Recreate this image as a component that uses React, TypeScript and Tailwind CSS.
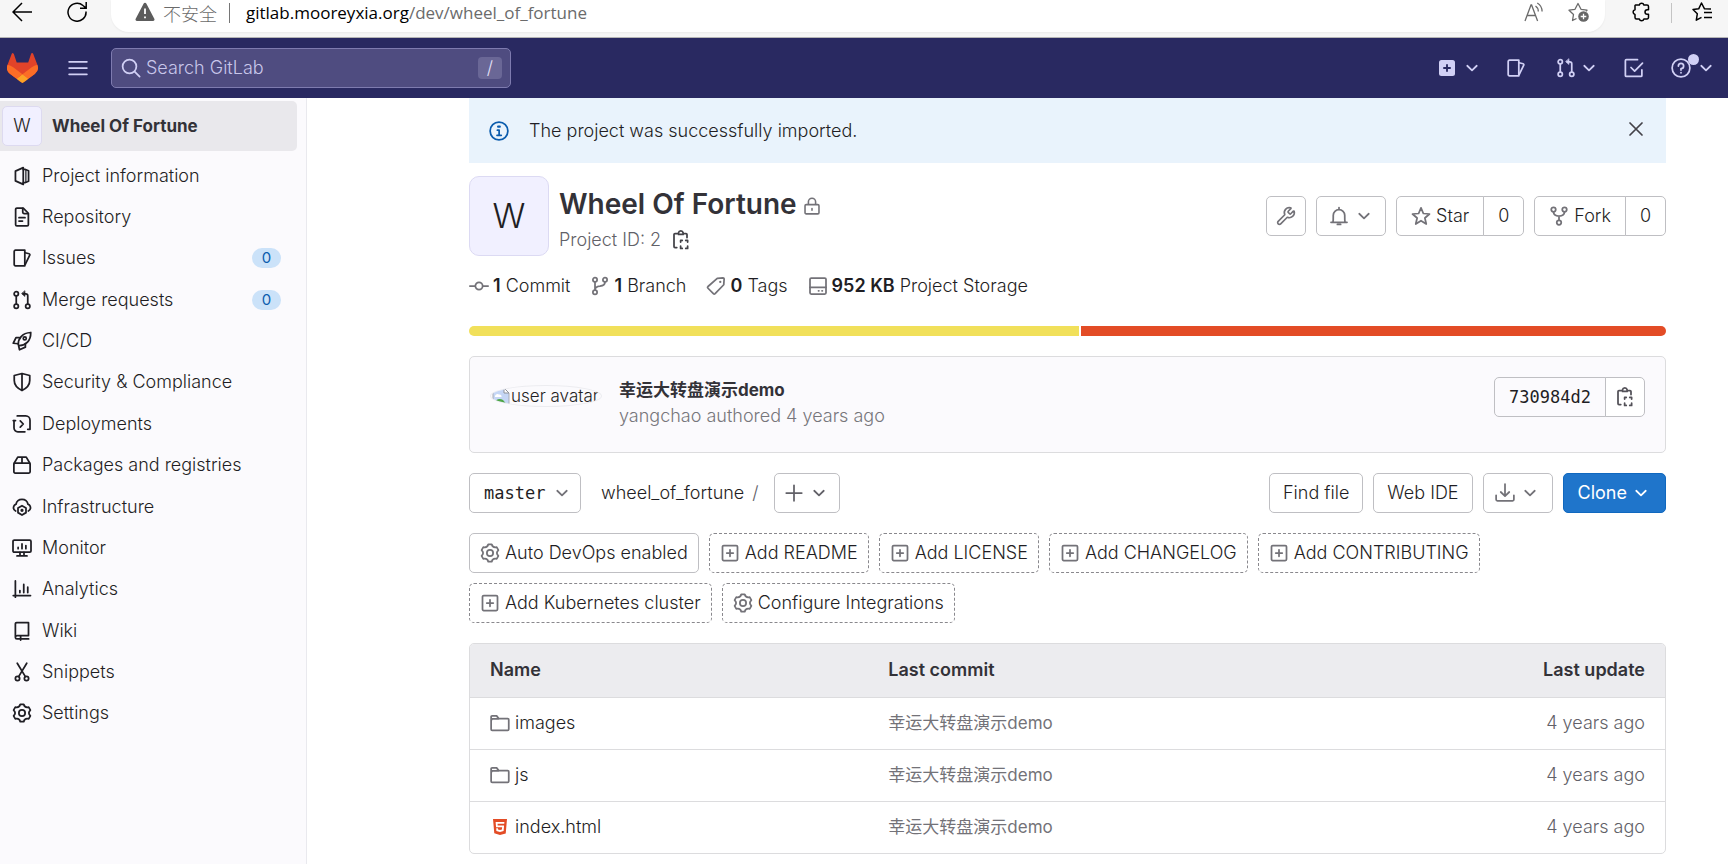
import type { ReactNode } from "react";
import clsx from "clsx";
import { Wrench } from "lucide-react";
import { SiHtml5 } from "react-icons/si";

interface IconProps {
  name: IconName;
  className?: string;
}

const shapes = {
  project: (
    <>
      <path d="M2.75 4.1 9 1.3v13.4l-6.25-2.8z" />
      <path d="M9 2.75h1.75l2.5 1v8.5l-2.5 1H9" />
      <path d="M11.1 3v10" strokeWidth="1" />
    </>
  ),
  doc: (
    <>
      <path d="M9 .9H3.9a1 1 0 0 0-1 1v12.2a1 1 0 0 0 1 1h8.2a1 1 0 0 0 1-1V5z" />
      <path d="M8.6 1v3.2a1 1 0 0 0 1 1h3.2M5.6 8.5h4.8M5.6 11.2h2.8" />
    </>
  ),
  issues: (
    <>
      <path d="M2.75 1.75h7.5v12.5h-7.5a1 1 0 0 1-1-1V2.75a1 1 0 0 1 1-1z" />
      <path d="m10.5 3.8 3.2.8a.8.8 0 0 1 .5 1.1l-3.6 7.4" />
    </>
  ),
  merge: (
    <>
      <circle cx="3.4" cy="3" r="1.7" />
      <circle cx="3.4" cy="12.9" r="1.7" />
      <circle cx="12.6" cy="12.9" r="1.7" />
      <path d="M3.4 4.8v6.3M12.6 11V4.6A1.6 1.6 0 0 0 11 3H9" />
      <path d="M10.3.9v4.2L7.9 3z" fill="currentColor" strokeWidth="0.6" />
    </>
  ),
  rocket: (
    <>
      <path d="M5 10.9C4.8 6.2 8 1.6 15 1.2c.1 6.8-4 10.2-9.2 10.5z" />
      <path d="M6 5.3H3.2L1 9.8l3.9.4M10.7 10.3v2.6L6 15l-.7-3.2" />
      <circle cx="10.2" cy="5.9" r="1.2" />
    </>
  ),
  shield: <path d="M8 1.2 14.2 2.8v4c0 4-2.5 6.2-6.2 8-3.7-1.8-6.2-4-6.2-8v-4zM8 1.5v13" />,
  deploy: (
    <>
      <path d="M4.2 1.5H11a3.4 3.4 0 0 1 3.4 3.4v7.3h-1.8M1.6 5.2V11a3.1 3.1 0 0 0 3.1 3.2h5.6" />
      <path d="M1 5.2h1.8M6.6 5.5 9 8l-2.4 2.5" />
    </>
  ),
  package: (
    <>
      <rect x="1.5" y="6.4" width="13" height="8" rx="1" />
      <path d="M1.7 6.6 4.6 1.7h6.8l2.9 4.9M8 2v4.3" />
    </>
  ),
  cloud: (
    <>
      <path d="M2.9 11.2A2.9 2.9 0 0 1 3.2 5.800a4.9 4.9 0 0 1 9.6 0 2.9 2.9 0 0 1 .3 5.4" />
      <path d="m8 7 3.2 1.8v3.7L8 14.4l-3.2-1.9V8.8z" />
      <circle cx="8" cy="10.7" r=".6" />
    </>
  ),
  monitor: (
    <>
      <rect x=".8" y="1.7" width="14.4" height="9.6" rx="1" />
      <path d="M4.9 7.5v1M8 4.7v3.8M11.1 6v2.5M4 14.3h8M6.4 11.5v2.6M9.6 11.5v2.6" />
    </>
  ),
  chart: <path d="M2.7 1.5v13M1 13.2h13.8M6.3 9.2v1.6M9.4 4.3v6.5M12.6 6.5v4.3" />,
  book: (
    <path d="M2.7 13V2.3a1 1 0 0 1 1-1h9.5v10.3H4.2A1.5 1.5 0 0 0 2.7 13.1c0 .8.6 1.2 1.3 1.2H13.3M6.9 11.8v3.4" />
  ),
  scissors: (
    <>
      <circle cx="4.4" cy="13.2" r="1.7" />
      <circle cx="11.6" cy="13.2" r="1.7" />
      <path d="M4.2 1 10.7 11.7M11.8 1 5.3 11.7" />
    </>
  ),
  gear: (
    <>
      <path d="M6.65 1.03H9.35Q10.1 4.1 13.36 3.34L14.71 5.69Q12.3 8 14.71 10.31L13.36 12.66Q10.1 11.9 9.35 14.97H6.65Q5.9 11.9 2.64 12.66L1.29 10.31Q3.7 8 1.29 5.69L2.64 3.34Q5.9 4.1 6.65 1.03z" />
      <circle cx="8" cy="8" r="2.5" />
    </>
  ),
  info: (
    <>
      <circle cx="8" cy="8" r="7.1" />
      <path d="M6.7 7.3h1.4v4M6.4 11.4h3.4" />
      <path d="M7.3 4.5h1.3" strokeWidth="1.8" />
    </>
  ),
  close: <path d="m3.2 3.2 9.6 9.6M12.8 3.2 3.2 12.8" />,
  lock: (
    <>
      <rect x="1.8" y="6.8" width="12.4" height="8.2" rx="1" />
      <path d="M4.8 6.5V4.3a3.2 3.2 0 0 1 6.4 0v2.2M8 10.2v1.5" />
    </>
  ),
  copy: (
    <>
      <path d="M5 2.8H3.2a.8.8 0 0 0-.8.8v9.6a.8.8 0 0 0 .8.8H4.6M10.8 2.8H12a.8.8 0 0 1 .8.8V6" />
      <path d="M6 3.5V2.2a1.9 1.9 0 0 1 3.7 0v1.3z" />
      <path d="M7.7 9.6v-1.3H9M11.8 8.3h1.5v1.3M13.3 12.9v1.8h-1.5M9 14.7H7.7v-1.8" />
    </>
  ),
  commit: (
    <>
      <circle cx="8" cy="8" r="2.9" />
      <path d="M.7 8h4M11.3 8h4" />
    </>
  ),
  branch: (
    <>
      <circle cx="4" cy="3" r="1.7" />
      <circle cx="4" cy="13" r="1.7" />
      <circle cx="12" cy="3" r="1.7" />
      <path d="M4 4.8v6.4M12 4.8c0 2.6-1.6 3-4 3.3-2.4.2-4 .9-4 3" />
    </>
  ),
  tag: (
    <>
      <path d="M9 1.9 13.6 1.5a.9.9 0 0 1 .9.9L14.2 7l-6.9 7.1a1 1 0 0 1-1.4 0L1.6 9.8a1 1 0 0 1 0-1.4z" />
      <path d="M11.4 4.6v.1" strokeWidth="1.8" />
    </>
  ),
  disk: (
    <>
      <rect x="1.6" y="1.6" width="12.8" height="12.8" rx="1" />
      <path d="M1.6 9h12.8M8.4 11.8h.3M11.2 11.8h.3" />
    </>
  ),
  bell: (
    <path d="M8 1.2v1M1.6 13h12.8M3.2 12.8c.3-1.8.2-3.8.2-5.3a4.6 4.6 0 0 1 9.2 0c0 1.5-.1 3.5.2 5.3M6.7 14.7h2.6" />
  ),
  star: <path d="m8 1.5 1.9 4.5 4.9.4-3.7 3.2 1.1 4.8L8 11.8l-4.2 2.6 1.1-4.8L1.2 6.4l4.9-.4z" />,
  fork: (
    <>
      <circle cx="3.6" cy="2.8" r="1.8" />
      <circle cx="12.4" cy="2.8" r="1.8" />
      <circle cx="8" cy="13.2" r="1.8" />
      <path d="M3.6 4.6C3.6 7.6 5.4 8 8 8s4.4-.4 4.4-3.4M8 8v3.4" />
    </>
  ),
  plus: <path d="M8 1.8v12.4M1.8 8h12.4" />,
  plusBox: (
    <>
      <rect x="2" y="2" width="12" height="12" rx="1" />
      <path d="M8 5.4v5.2M5.4 8h5.2" />
    </>
  ),
  download: <path d="M8 .8v9.5M4.6 7.2 8 10.5l3.4-3.3M.9 9.8v3.4a1 1 0 0 0 1 1h12.2a1 1 0 0 0 1-1V9.8" />,
  folder: <path d="M.9 13V3.1a.8.8 0 0 1 .8-.8h3.6l1.7 2.2h7.2a.8.8 0 0 1 .8.8V13a.8.8 0 0 1-.8.8H1.7a.8.8 0 0 1-.8-.8zM1 5.8l.8-1.2H7" />,
  search: (
    <>
      <circle cx="6.8" cy="6.8" r="5.5" />
      <path d="m10.9 10.9 4 4" />
    </>
  ),
  menu: <path d="M.9 3h14.2M.9 8h14.2M.9 13h14.2" />,
  todo: <path d="M10.8 1.3H1.9a.8.8 0 0 0-.8.8v11.800a.8.8 0 0 0 .8.8h11.600a.8.8 0 0 0 .8-.8V9.5M5.600 7.600l2.900 2.900 6.300-6.400" />,
  help: (
    <>
      <circle cx="8" cy="8" r="7.1" />
      <path d="M5.900 6.400A2.100 2.100 0 1 1 8 8.500v1.100M8 11.600v.2" />
    </>
  ),
  chevron: <path d="M4.200 6.200 8 9.900l3.800-3.700" />,
};

type IconName = keyof typeof shapes;

function Icon({ name, className }: IconProps) {
  return (
    <svg
      viewBox="0 0 16 16"
      fill="none"
      stroke="currentColor"
      strokeWidth="1.4"
      strokeLinecap="round"
      strokeLinejoin="round"
      aria-hidden="true"
      className={clsx("shrink-0", className ?? "size-5")}
    >
      {shapes[name]}
    </svg>
  );
}

function TanukiLogo() {
  return (
    <svg viewBox="0 0 25 24" className="h-[30px] w-[31px]" aria-hidden="true">
      <path
        fill="#E24329"
        d="m24.507 9.5-.034-.09L21.082.562a.896.896 0 0 0-1.694.091l-2.29 7.01H7.825L5.535.653a.898.898 0 0 0-1.694-.09L.451 9.411.416 9.5a6.297 6.297 0 0 0 2.09 7.278l.012.01.03.022 5.16 3.867 2.56 1.935 1.554 1.176a1.051 1.051 0 0 0 1.268 0l1.555-1.176 2.56-1.935 5.197-3.89.014-.01A6.297 6.297 0 0 0 24.507 9.5z"
      />
      <path
        fill="#FC6D26"
        d="m24.507 9.5-.034-.09a11.44 11.44 0 0 0-4.56 2.051l-7.447 5.632 4.742 3.584 5.197-3.89.014-.01A6.297 6.297 0 0 0 24.507 9.5z"
      />
      <path
        fill="#FCA326"
        d="m7.707 20.677 2.56 1.935 1.555 1.176a1.051 1.051 0 0 0 1.268 0l1.555-1.176 2.56-1.935-4.743-3.584-4.755 3.584z"
      />
      <path
        fill="#FC6D26"
        d="M5.01 11.461a11.43 11.43 0 0 0-4.56-2.05L.416 9.5a6.297 6.297 0 0 0 2.09 7.278l.012.01.03.022 5.16 3.867 4.745-3.584-7.444-5.632z"
      />
    </svg>
  );
}

function BrowserBar() {
  return (
    <div className="flex h-[38px] items-start border-b border-[#b5b5b5] bg-[#f6f6f6] pr-4 pl-3 text-black">
      <button type="button" aria-label="Back" className="flex h-6 w-5 items-center">
        <svg viewBox="0 0 20 20" fill="none" stroke="currentColor" strokeWidth="1.5" className="size-5">
          <path d="M20 10H1M10 1 1 10l9 9" />
        </svg>
      </button>
      <button type="button" aria-label="Reload" className="ml-[35px] flex h-6 w-5 items-center">
        <svg viewBox="0 0 20 20" fill="none" stroke="currentColor" strokeWidth="1.5" className="size-5">
          <path d="M19 9.5A9 9 0 1 1 16 3.5L19 6M19.2 0v6.2H13" />
        </svg>
      </button>
      <div className="ml-6 flex h-8 flex-1 items-start rounded-b-[18px] bg-white pr-4 pl-6 text-[#6b6b6b] shadow-xs">
        <svg viewBox="0 0 20 20" className="mt-0.5 size-5 shrink-0" aria-hidden="true">
          <path d="M8.7 1.5a1.5 1.5 0 0 1 2.6 0l8 15.2a1.5 1.5 0 0 1-1.3 2.3H2a1.5 1.5 0 0 1-1.3-2.3z" fill="#5c5c5c" />
          <path d="M10 6.5v5.5M10 14.5v1.8" stroke="#fff" strokeWidth="1.8" />
        </svg>
        <span className="ml-2 font-['Noto_Sans_CJK_SC',sans-serif] leading-[26px]">不安全</span>
        <span className="mt-[3px] ml-3 h-5 w-px bg-[#767676]" />
        <span className="ml-4 font-['Open_Sans',sans-serif] text-[17px] leading-[26px] font-normal">
          <span className="text-black">gitlab.mooreyxia.org</span>/dev/wheel_of_fortune
        </span>
        <button type="button" aria-label="Read aloud" className="ml-auto flex h-6 items-center">
          <svg viewBox="0 0 20 20" fill="none" stroke="currentColor" strokeWidth="1.3" className="size-5">
            <path d="M1 19 7 3h.6l6 16M3.2 13.5h8.3M11.5 4a6.5 6.5 0 0 1 2.8 5.5M13.3 1a10 10 0 0 1 4.8 8.5" />
          </svg>
        </button>
        <button type="button" aria-label="Add to favorites" className="ml-6 flex h-6 items-center">
          <svg viewBox="0 0 21 20" fill="none" stroke="currentColor" strokeWidth="1.3" strokeLinejoin="round" className="h-5 w-[21px]">
            <path d="M8.5 16.5 4.5 18.5l1-6L1 8.2l6-.9L10 1.5l3 5.8 6 .9-1 1" />
            <circle cx="15.5" cy="14.5" r="5.3" fill="#666" stroke="none" />
            <path d="M15.5 11.7v5.6M12.7 14.5h5.6" stroke="#fff" />
          </svg>
        </button>
      </div>
      <button type="button" aria-label="Extensions" className="ml-[26px] flex h-6 items-center">
        <svg viewBox="0 0 20 20" fill="none" stroke="currentColor" strokeWidth="1.5" strokeLinejoin="round" className="size-5">
          <path d="M4.500 3h3.800a2.400 2.400 0 0 1 4.600 0H16a1.500 1.500 0 0 1 1.500 1.500v3.200h-1.200a2.300 2.300 0 0 0 0 4.600h1.200v3.200A1.500 1.500 0 0 1 16 17h-3.100a2.400 2.400 0 0 1-4.600 0H5.500A1.500 1.500 0 0 1 4 15.500v-3.100a2.400 2.400 0 0 1 0-4.700V3.500z" />
        </svg>
      </button>
      <span className="mt-[3px] ml-5 h-5 w-px bg-[#c4c4c4]" />
      <button type="button" aria-label="Favorites" className="ml-5 flex h-6 items-center">
        <svg viewBox="0 0 20 20" fill="none" stroke="currentColor" strokeWidth="1.5" strokeLinejoin="round" className="size-5">
          <path d="M19 7 12.5 6.8 9.5 1l-2.8 5.8L1 7.5l4.3 4.3-1 6.4 5.2-2.8M12 10.5h8M12 15.5h8" />
        </svg>
      </button>
    </div>
  );
}

function NavBar() {
  return (
    <header className="flex h-[60px] items-center bg-[#292961] pr-3 pl-[7px] text-[#d1d0f5]">
      <a href="#" aria-label="Homepage">
        <TanukiLogo />
      </a>
      <button type="button" aria-label="Menu" className="ml-[30px]">
        <Icon name="menu" />
      </button>
      <div className="ml-[23px] flex h-10 w-[400px] items-center rounded-[5px] border border-[#7e7baf] bg-[#4f4c80] pr-2 pl-[9px]">
        <Icon name="search" />
        <input
          type="search"
          aria-label="Search GitLab"
          placeholder="Search GitLab"
          className="ml-[5px] min-w-0 flex-1 bg-transparent outline-none placeholder:text-[#c8c6ea]"
        />
        <kbd className="flex h-[22px] w-6 items-center justify-center rounded-[4px] bg-[#6a6796] font-['Inter',sans-serif] text-[#e0dff5]">
          /
        </kbd>
      </div>
      <nav className="ml-auto flex items-center">
        <button type="button" aria-label="Create new" className="flex items-center gap-[5px]">
          <svg viewBox="0 0 16 16" className="size-5" aria-hidden="true">
            <rect x="1.6" y="1.6" width="12.8" height="12.8" rx="2" fill="currentColor" />
            <path d="M8 5v6M5 8h6" stroke="#292961" strokeWidth="1.5" />
          </svg>
          <Icon name="chevron" className="size-5" />
        </button>
        <a href="#" aria-label="Issues" className="ml-6">
          <Icon name="issues" />
        </a>
        <button type="button" aria-label="Merge requests" className="ml-[30px] flex items-center gap-[3px]">
          <Icon name="merge" />
          <Icon name="chevron" className="size-5" />
        </button>
        <a href="#" aria-label="To-Do List" className="ml-[25px]">
          <Icon name="todo" />
        </a>
        <button type="button" aria-label="Help" className="relative ml-[27px] flex items-center gap-[5px]">
          <Icon name="help" />
          <Icon name="chevron" className="size-5" />
          <span className="absolute -top-1 left-[17px] size-[11px] rounded-full bg-[#d1d0f5]" />
        </button>
      </nav>
    </header>
  );
}

const sidebarItems: { label: string; icon: IconName; count?: number }[] = [
  { label: "Project information", icon: "project" },
  { label: "Repository", icon: "doc" },
  { label: "Issues", icon: "issues", count: 0 },
  { label: "Merge requests", icon: "merge", count: 0 },
  { label: "CI/CD", icon: "rocket" },
  { label: "Security & Compliance", icon: "shield" },
  { label: "Deployments", icon: "deploy" },
  { label: "Packages and registries", icon: "package" },
  { label: "Infrastructure", icon: "cloud" },
  { label: "Monitor", icon: "monitor" },
  { label: "Analytics", icon: "chart" },
  { label: "Wiki", icon: "book" },
  { label: "Snippets", icon: "scissors" },
  { label: "Settings", icon: "gear" },
];

function Sidebar() {
  return (
    <aside className="w-[307px] shrink-0 border-r border-[#e9e9ee] bg-[#fbfafd] pt-[3px]">
      <a href="#" className="mr-[9px] flex h-[50px] items-center rounded-r-[5px] bg-[#e9e8ec] pl-0.5">
        <span className="flex size-10 items-center justify-center rounded-[5px] border border-[#dddaf0] bg-[#f1f0ff]">W</span>
        <span className="ml-[10px] text-[17px] font-bold text-[#333238]">Wheel Of Fortune</span>
      </a>
      <ul className="mt-1 grid min-h-[579px] auto-rows-fr">
        {sidebarItems.map((item) => (
          <li key={item.label} className="flex">
            <a href="#" className="flex flex-1 items-center pr-[25px] pl-3">
              <Icon name={item.icon} />
              <span className="ml-[10px]">{item.label}</span>
              {item.count !== undefined && (
                <span className="ml-auto flex h-5 w-[29px] items-center justify-center rounded-full bg-[#cbe2f9] text-[15px] font-normal text-[#0b5cad]">
                  {item.count}
                </span>
              )}
            </a>
          </li>
        ))}
      </ul>
    </aside>
  );
}

const buttonClass = "flex h-10 items-center rounded-[5px] border border-[#bfbfc3] bg-white";

function CountButton({ icon, label, count }: { icon: IconName; label: string; count: number }) {
  return (
    <div className="flex">
      <button type="button" className={clsx(buttonClass, "rounded-r-none px-[14px]")}>
        <Icon name={icon} className="size-5 text-[#737278]" />
        <span className="ml-[5px]">{label}</span>
      </button>
      <a href="#" className={clsx(buttonClass, "-ml-px w-[41px] justify-center rounded-l-none")}>
        {count}
      </a>
    </div>
  );
}

function ProjectHeader() {
  return (
    <div className="mt-[13px] flex items-center">
      <div className="flex size-20 shrink-0 items-center justify-center rounded-[10px] border border-[#dcdaf3] bg-[#f1f0ff] text-[34px]">
        W
      </div>
      <div className="ml-[10px] self-end">
        <h1 className="flex items-center text-[28px] leading-10 font-semibold text-[#333238]">
          Wheel Of Fortune
          <Icon name="lock" className="mt-1 ml-[6px] size-[18px] text-[#737278]" />
        </h1>
        <div className="flex items-center leading-8 text-[#626168]">
          Project ID: 2
          <button type="button" aria-label="Copy project ID" className="ml-[10px] text-[#434248]">
            <Icon name="copy" />
          </button>
        </div>
      </div>
      <div className="ml-auto flex gap-[10px]">
        <button type="button" aria-label="Admin" className={clsx(buttonClass, "w-10 justify-center text-[#737278]")}>
          <Wrench className="size-5" strokeWidth={2} />
        </button>
        <button type="button" aria-label="Notifications" className={clsx(buttonClass, "w-[70px] justify-center gap-[5px] text-[#737278]")}>
          <Icon name="bell" />
          <Icon name="chevron" />
        </button>
        <CountButton icon="star" label="Star" count={0} />
        <CountButton icon="fork" label="Fork" count={0} />
      </div>
    </div>
  );
}

function Stat({ icon, value, label }: { icon: IconName; value: string; label: string }) {
  return (
    <a href="#" className="flex items-center">
      <Icon name={icon} className="mr-1 size-5 text-[#737278]" />
      <span>
        <strong className="font-semibold">{value}</strong> {label}
      </span>
    </a>
  );
}

function LastCommit() {
  return (
    <section className="mt-5 flex h-[97px] items-start rounded-[5px] border border-[#dcdcde] bg-[#fbfafd] px-5 pt-5">
      <div className="mt-2 flex h-[22px] w-[112px] shrink-0 items-center overflow-hidden rounded-[50%] border border-[#ececf0] text-[17px] leading-5 whitespace-nowrap">
        <svg viewBox="0 0 20 20" className="size-5 shrink-0" aria-hidden="true">
          <path d="M2 2h11l5 5v11H2z" fill="#c5d6f5" stroke="#a9adb5" />
          <path d="M13 2v5h5z" fill="#fff" stroke="#8d9199" />
          <path d="M4 10a2.5 2.5 0 0 1 4-1.5 2 2 0 0 1 2.5 2.5H4z" fill="#fff" />
          <path d="M2.5 17.5c2-4 6-6 9.5-3.5l3 3.5z" fill="#4fa646" />
        </svg>
        <span>user avatar</span>
      </div>
      <div className="ml-[17px] leading-[26px]">
        <a href="#" className="block text-[17px] font-bold text-[#333238]">
          幸运大转盘演示demo
        </a>
        <p className="text-[#77767b]">yangchao authored 4 years ago</p>
      </div>
      <div className="ml-auto flex">
        <span className="flex h-10 items-center rounded-l-[5px] border border-[#bfbfc3] px-[14px] font-['DejaVu_Sans_Mono',monospace] text-[17px]">
          730984d2
        </span>
        <button type="button" aria-label="Copy commit SHA" className={clsx(buttonClass, "-ml-px w-10 justify-center rounded-l-none text-[#535158]")}>
          <Icon name="copy" />
        </button>
      </div>
    </section>
  );
}

function TreeControls() {
  return (
    <div className="mt-5 flex items-center">
      <div className="relative flex items-center">
        <select
          aria-label="Branch"
          className={clsx(buttonClass, "appearance-none pr-[34px] pl-[14px] font-['DejaVu_Sans_Mono',monospace] text-[17px]")}
          defaultValue="master"
        >
          <option value="master">master</option>
        </select>
        <Icon name="chevron" className="pointer-events-none absolute right-[9px] size-5 text-[#737278]" />
      </div>
      <a href="#" className="ml-5">
        wheel_of_fortune
      </a>
      <span className="ml-2 text-[#626168]">/</span>
      <button type="button" aria-label="Add to tree" className={clsx(buttonClass, "ml-[15px] w-[66px] justify-center gap-[5px] text-[#626168]")}>
        <Icon name="plus" />
        <Icon name="chevron" />
      </button>
      <div className="ml-auto flex gap-[10px]">
        <button type="button" className={clsx(buttonClass, "px-[13px]")}>
          Find file
        </button>
        <button type="button" className={clsx(buttonClass, "px-[13px]")}>
          Web IDE
        </button>
        <button type="button" aria-label="Download" className={clsx(buttonClass, "w-[70px] justify-center gap-[5px] text-[#737278]")}>
          <Icon name="download" />
          <Icon name="chevron" />
        </button>
        <button type="button" className="flex h-10 items-center gap-1 rounded-[5px] border border-[#1068bf] bg-[#1f75cb] px-[14px] font-normal text-white">
          Clone
          <Icon name="chevron" />
        </button>
      </div>
    </div>
  );
}

const setupLinks: { label: string; icon: IconName; solid?: boolean }[] = [
  { label: "Auto DevOps enabled", icon: "gear", solid: true },
  { label: "Add README", icon: "plusBox" },
  { label: "Add LICENSE", icon: "plusBox" },
  { label: "Add CHANGELOG", icon: "plusBox" },
  { label: "Add CONTRIBUTING", icon: "plusBox" },
  { label: "Add Kubernetes cluster", icon: "plusBox" },
  { label: "Configure Integrations", icon: "gear" },
];

function SetupLinks() {
  return (
    <div className="mt-5 flex max-w-[1060px] flex-wrap gap-[10px]">
      {setupLinks.map(({ label, icon, solid }) => (
        <a
          key={label}
          href="#"
          className={clsx(
            "flex h-10 items-center gap-[5px] rounded-[5px] border px-[10px]",
            solid ? "border-[#bfbfc3]" : "border-dashed border-[#89888d]",
          )}
        >
          <Icon name={icon} className="size-5 text-[#737278]" />
          {label}
        </a>
      ))}
    </div>
  );
}

const files: { name: string; icon: ReactNode }[] = [
  { name: "images", icon: <Icon name="folder" className="size-5 text-[#737278]" /> },
  { name: "js", icon: <Icon name="folder" className="size-5 text-[#737278]" /> },
  { name: "index.html", icon: <SiHtml5 className="mx-[2px] size-4 shrink-0 text-[#e34c26]" /> },
];

function FileTable() {
  return (
    <div className="mt-5 overflow-hidden rounded-[5px] border border-[#dcdcde]">
      <table className="w-full table-fixed text-left">
        <thead>
          <tr className="h-[53px] bg-[#ececef] text-[#333238]">
            <th className="w-1/3 pl-5 font-semibold">Name</th>
            <th className="pl-5 font-semibold">Last commit</th>
            <th className="w-1/4 pr-5 text-right font-semibold">Last update</th>
          </tr>
        </thead>
        <tbody>
          {files.map((file) => (
            <tr key={file.name} className="h-[52px] border-t border-[#dcdcde]">
              <td className="pl-5">
                <a href="#" className="flex items-center gap-[5px]">
                  {file.icon}
                  {file.name}
                </a>
              </td>
              <td className="pl-5 text-[17px] font-normal text-[#737278]">
                <a href="#">幸运大转盘演示demo</a>
              </td>
              <td className="pr-5 text-right text-[#626168]">4 years ago</td>
            </tr>
          ))}
        </tbody>
      </table>
    </div>
  );
}

export default function App() {
  return (
    <div className="flex min-h-screen flex-col bg-white font-['Inter','Noto_Sans_CJK_SC',sans-serif] text-[18px] leading-6 font-light text-[#1f1e24]">
      <BrowserBar />
      <NavBar />
      <div className="flex flex-1">
        <Sidebar />
        <main className="min-w-0 flex-1 pr-[62px] pl-[162px]">
          <div role="status" className="flex h-[65px] items-center bg-[#e9f3fc] px-5">
            <Icon name="info" className="size-5 text-[#0b5cad]" />
            <span className="ml-5">The project was successfully imported.</span>
            <button type="button" aria-label="Dismiss" className="mb-1 ml-auto text-[#434248]">
              <Icon name="close" />
            </button>
          </div>
          <ProjectHeader />
          <div className="mt-[18px] flex gap-5">
            <Stat icon="commit" value="1" label="Commit" />
            <Stat icon="branch" value="1" label="Branch" />
            <Stat icon="tag" value="0" label="Tags" />
            <Stat icon="disk" value="952 KB" label="Project Storage" />
          </div>
          <div className="mt-7 flex h-[10px] gap-0.5 overflow-hidden rounded-full">
            <div className="w-[51%] bg-[#f1e05a]" />
            <div className="flex-1 bg-[#e34c26]" />
          </div>
          <LastCommit />
          <TreeControls />
          <SetupLinks />
          <FileTable />
        </main>
      </div>
    </div>
  );
}
